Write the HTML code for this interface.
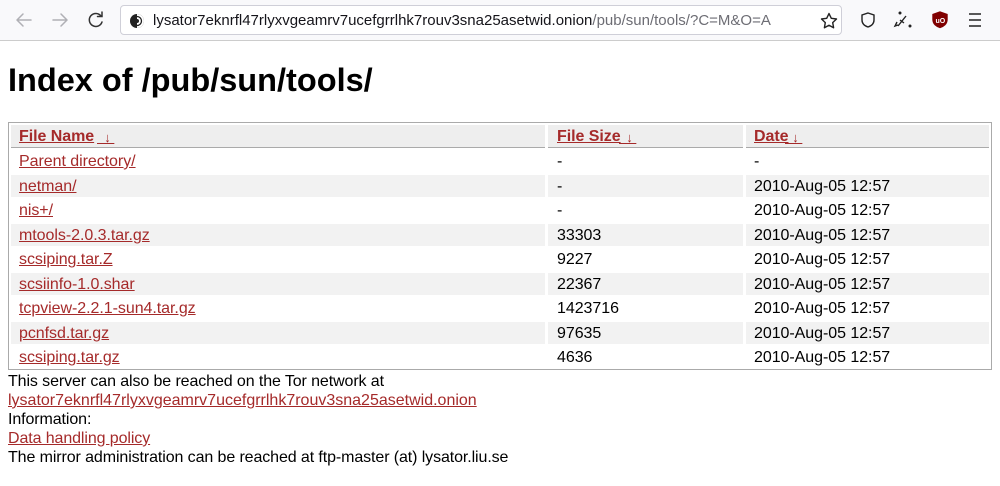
<!DOCTYPE html>
<html><head><meta charset="utf-8"><style>
body{margin:0;width:1000px;height:486px;overflow:hidden;background:#fff;font-family:"Liberation Sans",sans-serif;position:relative}
.bar{position:absolute;left:0;top:0;width:1000px;height:40px;background:#f9f9fb;border-bottom:1px solid #ccc}
.url{position:absolute;left:120px;top:5px;width:722px;height:30px;background:#fff;border:1px solid #cfcfd8;border-radius:4px;box-sizing:border-box}
.url span{position:absolute;left:32px;top:6px;font-size:15px;color:#15141a}
.url span i{font-style:normal;color:#6d6d74}
a{color:#a52a2a}
.ab{position:absolute;white-space:nowrap;font-size:16px;letter-spacing:-0.1px}
h1{position:absolute;left:8px;top:62px;margin:0;font-size:32.5px;font-weight:bold}
.tbl{position:absolute;left:8px;top:122px;width:984px;height:248px;border:1px solid #aaa;box-sizing:border-box}
.c{position:absolute;height:22px}
.h{background:#eee;border-bottom:1px solid #aaa;height:22px}
.s{background:#f2f2f2}
.t{position:absolute;font-size:16px;white-space:nowrap;top:3px;letter-spacing:-0.05px}
.ar{font-size:13px;top:5px;letter-spacing:0}
</style></head><body>
<div class="bar">
<svg width="120" height="40" style="position:absolute;left:0;top:0" fill="none" stroke-width="1.5" stroke-linecap="round">
<path d="M17 20h14M17 20l6-6M17 20l6 6" stroke="#b0b0b5"/>
<path d="M53 20h14M67 20l-6-6M67 20l-6 6" stroke="#b0b0b5"/>
<path d="M101 16a6.5 6.5 0 1 0 1 6M102 12v4.5h-4.5" stroke="#333"/>
</svg>
<div class="url">
<svg width="20" height="20" style="position:absolute;left:6px;top:5px"><circle cx="10" cy="10" r="7" fill="#222"/><path d="M10 3a7 7 0 0 1 0 14z" fill="#fff"/><path d="M10 5.5a4.5 4.5 0 0 1 0 9" stroke="#222" fill="none" stroke-width="1.3"/><path d="M10 8a2 2 0 0 1 0 4z" fill="#222"/></svg>
<span>lysator7eknrfl47rlyxvgeamrv7ucefgrrlhk7rouv3sna25asetwid.onion<i>/pub/sun/tools/?C=M&amp;O=A</i></span>
<svg width="20" height="20" style="position:absolute;left:698px;top:5px"><path d="M10 2.5l2.3 4.8 5.2.7-3.8 3.6.9 5.2L10 14.3l-4.6 2.5.9-5.2-3.8-3.6 5.2-.7z" fill="none" stroke="#222" stroke-width="1.4" stroke-linejoin="round"/></svg>
</div>
<svg width="150" height="40" style="position:absolute;left:850px;top:0" fill="none" stroke="#222" stroke-width="1.4">
<path d="M18 13l6 2v5c0 4-3 6-6 7-3-1-6-3-6-7v-5z"/>
<path d="M48 26l8-10M50 20l4 3 M47 22l-2 4 3-1" /><circle cx="50" cy="13" r=".8" fill="#222"/><circle cx="60" cy="26" r=".8" fill="#222"/>
<path d="M90 12l7 2.5v5c0 4.5-3.5 7-7 8-3.5-1-7-3.5-7-8v-5z" fill="#800000" stroke="#800000"/>
<text x="85.5" y="23" font-size="7" fill="#fff" stroke="none" font-family="Liberation Sans" font-weight="bold">uO</text>
<path d="M119 14h12M119 20h12M119 26h12"/>
</svg>
</div>
<h1>Index of /pub/sun/tools/</h1>
<div class="tbl"></div>
<div class="c h" style="left:11px;top:125px;width:534px"><a class="t" style="left:8px;font-weight:bold" href="#">File Name</a><a class="t ar" style="left:86px" href="#">&nbsp;&nbsp;↓&nbsp;</a></div>
<div class="c h" style="left:548px;top:125px;width:195px"><a class="t" style="left:9px;font-weight:bold" href="#">File Size</a><a class="t ar" style="left:71px" href="#">&nbsp;&nbsp;↓&nbsp;</a></div>
<div class="c h" style="left:746px;top:125px;width:243px"><a class="t" style="left:8px;font-weight:bold" href="#">Date</a><a class="t ar" style="left:39px" href="#">&nbsp;&nbsp;↓&nbsp;</a></div>
<div id="rows"></div>
<div class="ab" style="left:8px;top:373px">This server can also be reached on the Tor network at</div>
<div class="ab" style="left:8px;top:392px;letter-spacing:0"><a href="#">lysator7eknrfl47rlyxvgeamrv7ucefgrrlhk7rouv3sna25asetwid.onion</a></div>
<div class="ab" style="left:8px;top:411px">Information:</div>
<div class="ab" style="left:8px;top:430px"><a href="#">Data handling policy</a></div>
<div class="ab" style="left:8px;top:449px">The mirror administration can be reached at ftp-master (at) lysator.liu.se</div>
<script>
var d=[["Parent directory/","-","-"],["netman/","-","2010-Aug-05 12:57"],["nis+/","-","2010-Aug-05 12:57"],["mtools-2.0.3.tar.gz","33303","2010-Aug-05 12:57"],["scsiping.tar.Z","9227","2010-Aug-05 12:57"],["scsiinfo-1.0.shar","22367","2010-Aug-05 12:57"],["tcpview-2.2.1-sun4.tar.gz","1423716","2010-Aug-05 12:57"],["pcnfsd.tar.gz","97635","2010-Aug-05 12:57"],["scsiping.tar.gz","4636","2010-Aug-05 12:57"]];
var h="";d.forEach(function(r,i){var y=150+i*24.5,s=i%2?" s":"";
h+='<div class="c'+s+'" style="left:11px;top:'+y+'px;width:534px"><a class="t" style="left:8px" href="#">'+r[0]+'</a></div>';
h+='<div class="c'+s+'" style="left:548px;top:'+y+'px;width:195px"><span class="t" style="left:9px">'+r[1]+'</span></div>';
h+='<div class="c'+s+'" style="left:746px;top:'+y+'px;width:243px"><span class="t" style="left:8px">'+r[2]+'</span></div>';});
document.getElementById("rows").innerHTML=h;
</script>
</body></html>
